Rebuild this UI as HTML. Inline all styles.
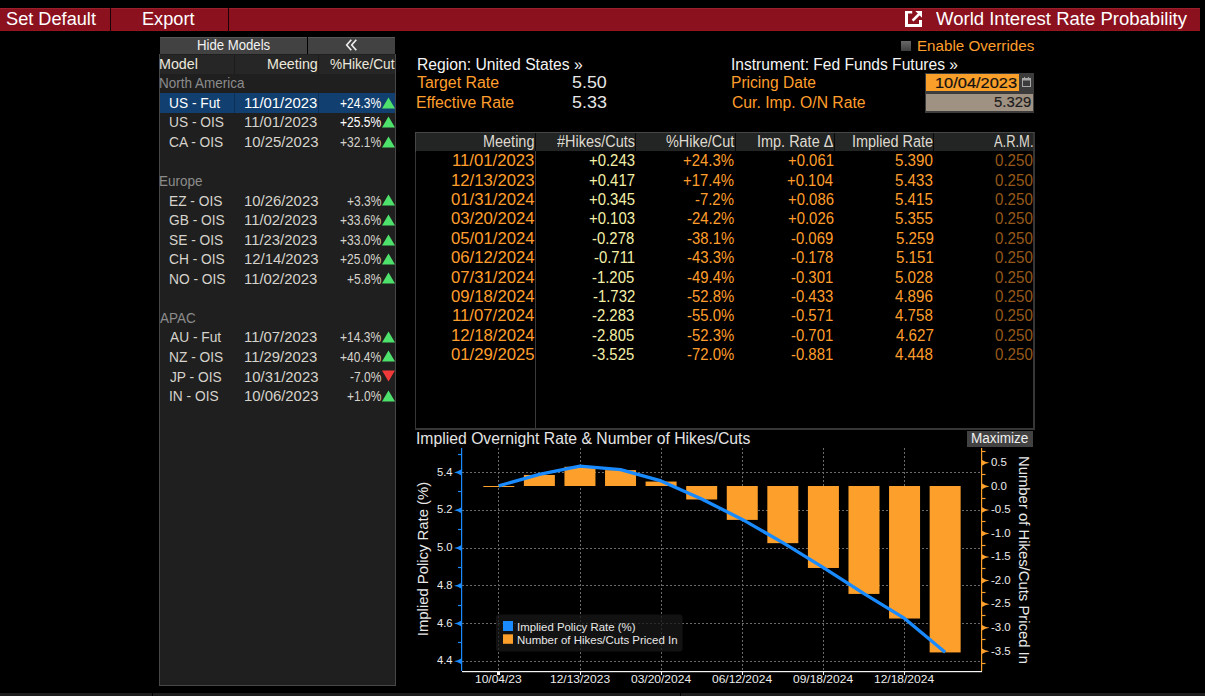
<!DOCTYPE html>
<html><head><meta charset="utf-8"><style>
html,body{margin:0;padding:0;background:#000;width:1205px;height:696px;overflow:hidden}
body{position:relative;font-family:"Liberation Sans",sans-serif}
.t{position:absolute;white-space:nowrap;line-height:1;transform-origin:0 50%}
.r{position:absolute}
</style></head><body>
<div class="r" style="left:0px;top:8px;width:1200px;height:23px;background:#8b111f;"></div>
<div class="r" style="left:0px;top:8px;width:1200px;height:1px;background:#9c1f2c;"></div>
<div class="r" style="left:0px;top:30px;width:1200px;height:1px;background:#94141f;"></div>
<div class="r" style="left:110px;top:8px;width:1px;height:23px;background:#1a0306;"></div>
<div class="r" style="left:228px;top:8px;width:1px;height:23px;background:#1a0306;"></div>
<span class="t" style="left:6.48px;top:9.68px;font-size:18.5px;color:#fff;transform:scaleX(0.9828);">Set Default</span>
<span class="t" style="left:142.05px;top:9.68px;font-size:18.5px;color:#fff;transform:scaleX(0.9826);">Export</span>
<span class="t" style="left:935.91px;top:9.64px;font-size:18.9px;color:#fff;transform:scaleX(0.9808);">World Interest Rate Probability</span>
<svg class="r" style="left:905px;top:11px" width="17" height="16" viewBox="0 0 17 16">
<path d="M0 0H7.2V2.6H3V13H14V9H17V16H0Z" fill="#fff"/>
<path d="M10.3 0H17V6.7Z" fill="#fff"/>
<path d="M7.6 9.6L14.2 3" stroke="#fff" stroke-width="2.6"/>
</svg>
<div class="r" style="left:901px;top:40.5px;width:10px;height:10px;background:linear-gradient(#686868,#3e3e3e);"></div>
<span class="t" style="left:916.59px;top:38.23px;font-size:15.5px;color:#ff9e2c;transform:scaleX(0.9792);">Enable Overrides</span>
<div class="r" style="left:159px;top:54px;width:237px;height:632px;background:#1f1f1f;box-sizing:border-box;border:1px solid #474747;border-top:none"></div>
<div class="r" style="left:160px;top:37px;width:147px;height:17px;background:#424242;"></div>
<div class="r" style="left:308px;top:37px;width:87px;height:17px;background:#424242;"></div>
<span class="t" style="left:196.55px;top:38.07px;font-size:14.5px;color:#f2f2f2;transform:scaleX(0.9081);">Hide Models</span>
<svg class="r" style="left:340px;top:34px" width="24" height="20"><path d="M11.3 5.7L6.7 11L11.3 16.3M16.3 5.7L11.7 11L16.3 16.3" fill="none" stroke="#ececec" stroke-width="1.7"/></svg>
<div class="r" style="left:160px;top:37px;width:147px;height:1px;background:#575757;"></div>
<div class="r" style="left:308px;top:37px;width:87px;height:1px;background:#575757;"></div>
<div class="r" style="left:160px;top:55px;width:235px;height:19px;background:#262626;"></div>
<div class="r" style="left:234px;top:55px;width:1px;height:19px;background:#1c1c1c;"></div>
<div class="r" style="left:318px;top:55px;width:1px;height:19px;background:#1c1c1c;"></div>
<span class="t" style="left:159.36px;top:57.07px;font-size:14.5px;color:#ece8dc;transform:scaleX(0.9856);">Model</span>
<span class="t" style="left:267.16px;top:57.07px;font-size:14.5px;color:#ece8dc;transform:scaleX(0.9849);">Meeting</span>
<span class="t" style="left:330.02px;top:57.07px;font-size:14.5px;color:#ece8dc;transform:scaleX(0.9416);">%Hike/Cut</span>
<span class="t" style="left:159.12px;top:76.28px;font-size:14.5px;color:#8c8c8c;transform:scaleX(0.9300);">North America</span>
<div class="r" style="left:160px;top:93px;width:235px;height:20px;background:#113f70;"></div>
<div class="r" style="left:234px;top:93px;width:1px;height:20px;background:#0b3159;"></div>
<div class="r" style="left:318px;top:93px;width:1px;height:20px;background:#0b3159;"></div>
<span class="t" style="left:168.97px;top:95.83px;font-size:14.5px;color:#ffffff;transform:scaleX(0.9473);">US - Fut</span>
<span class="t" style="left:244.28px;top:95.83px;font-size:14.5px;color:#ffffff;transform:scaleX(1.0255);">11/01/2023</span>
<span class="t" style="left:340.00px;top:95.83px;font-size:14.5px;color:#ffffff;transform:scaleX(0.8313);">+24.3%</span>
<svg class="r" style="left:382px;top:97px" width="13" height="12"><path d="M6.5 0.5L13 11.5H0Z" fill="#4ee26c"/></svg>
<span class="t" style="left:168.97px;top:115.38px;font-size:14.5px;color:#d6d3cc;transform:scaleX(0.9473);">US - OIS</span>
<span class="t" style="left:244.28px;top:115.38px;font-size:14.5px;color:#d6d3cc;transform:scaleX(1.0255);">11/01/2023</span>
<span class="t" style="left:340.00px;top:115.38px;font-size:14.5px;color:#ffffff;transform:scaleX(0.8313);">+25.5%</span>
<svg class="r" style="left:382px;top:116px" width="13" height="12"><path d="M6.5 0.5L13 11.5H0Z" fill="#4ee26c"/></svg>
<span class="t" style="left:169.31px;top:134.93px;font-size:14.5px;color:#d6d3cc;transform:scaleX(0.9473);">CA - OIS</span>
<span class="t" style="left:244.28px;top:134.93px;font-size:14.5px;color:#d6d3cc;transform:scaleX(1.0255);">10/25/2023</span>
<span class="t" style="left:340.00px;top:134.93px;font-size:14.5px;color:#d6d3cc;transform:scaleX(0.8313);">+32.1%</span>
<svg class="r" style="left:382px;top:136px" width="13" height="12"><path d="M6.5 0.5L13 11.5H0Z" fill="#4ee26c"/></svg>
<span class="t" style="left:159.12px;top:174.03px;font-size:14.5px;color:#8c8c8c;transform:scaleX(0.9300);">Europe</span>
<span class="t" style="left:168.90px;top:193.58px;font-size:14.5px;color:#d6d3cc;transform:scaleX(0.9473);">EZ - OIS</span>
<span class="t" style="left:244.28px;top:193.58px;font-size:14.5px;color:#d6d3cc;transform:scaleX(1.0255);">10/26/2023</span>
<span class="t" style="left:346.69px;top:193.58px;font-size:14.5px;color:#d6d3cc;transform:scaleX(0.8313);">+3.3%</span>
<svg class="r" style="left:382px;top:194px" width="13" height="12"><path d="M6.5 0.5L13 11.5H0Z" fill="#4ee26c"/></svg>
<span class="t" style="left:169.31px;top:213.13px;font-size:14.5px;color:#d6d3cc;transform:scaleX(0.9473);">GB - OIS</span>
<span class="t" style="left:244.28px;top:213.13px;font-size:14.5px;color:#d6d3cc;transform:scaleX(1.0255);">11/02/2023</span>
<span class="t" style="left:340.00px;top:213.13px;font-size:14.5px;color:#d6d3cc;transform:scaleX(0.8313);">+33.6%</span>
<svg class="r" style="left:382px;top:214px" width="13" height="12"><path d="M6.5 0.5L13 11.5H0Z" fill="#4ee26c"/></svg>
<span class="t" style="left:169.38px;top:232.68px;font-size:14.5px;color:#d6d3cc;transform:scaleX(0.9473);">SE - OIS</span>
<span class="t" style="left:244.28px;top:232.68px;font-size:14.5px;color:#d6d3cc;transform:scaleX(1.0255);">11/23/2023</span>
<span class="t" style="left:340.00px;top:232.68px;font-size:14.5px;color:#d6d3cc;transform:scaleX(0.8313);">+33.0%</span>
<svg class="r" style="left:382px;top:234px" width="13" height="12"><path d="M6.5 0.5L13 11.5H0Z" fill="#4ee26c"/></svg>
<span class="t" style="left:169.31px;top:252.23px;font-size:14.5px;color:#d6d3cc;transform:scaleX(0.9473);">CH - OIS</span>
<span class="t" style="left:244.28px;top:252.23px;font-size:14.5px;color:#d6d3cc;transform:scaleX(1.0255);">12/14/2023</span>
<span class="t" style="left:340.00px;top:252.23px;font-size:14.5px;color:#d6d3cc;transform:scaleX(0.8313);">+25.0%</span>
<svg class="r" style="left:382px;top:253px" width="13" height="12"><path d="M6.5 0.5L13 11.5H0Z" fill="#4ee26c"/></svg>
<span class="t" style="left:168.90px;top:271.77px;font-size:14.5px;color:#d6d3cc;transform:scaleX(0.9473);">NO - OIS</span>
<span class="t" style="left:244.28px;top:271.77px;font-size:14.5px;color:#d6d3cc;transform:scaleX(1.0255);">11/02/2023</span>
<span class="t" style="left:346.69px;top:271.77px;font-size:14.5px;color:#d6d3cc;transform:scaleX(0.8313);">+5.8%</span>
<svg class="r" style="left:382px;top:272px" width="13" height="12"><path d="M6.5 0.5L13 11.5H0Z" fill="#4ee26c"/></svg>
<span class="t" style="left:160.20px;top:310.88px;font-size:14.5px;color:#8c8c8c;transform:scaleX(0.9300);">APAC</span>
<span class="t" style="left:170.00px;top:330.43px;font-size:14.5px;color:#d6d3cc;transform:scaleX(0.9473);">AU - Fut</span>
<span class="t" style="left:244.28px;top:330.43px;font-size:14.5px;color:#d6d3cc;transform:scaleX(1.0255);">11/07/2023</span>
<span class="t" style="left:340.00px;top:330.43px;font-size:14.5px;color:#d6d3cc;transform:scaleX(0.8313);">+14.3%</span>
<svg class="r" style="left:382px;top:331px" width="13" height="12"><path d="M6.5 0.5L13 11.5H0Z" fill="#4ee26c"/></svg>
<span class="t" style="left:168.90px;top:349.97px;font-size:14.5px;color:#d6d3cc;transform:scaleX(0.9473);">NZ - OIS</span>
<span class="t" style="left:244.28px;top:349.97px;font-size:14.5px;color:#d6d3cc;transform:scaleX(1.0255);">11/29/2023</span>
<span class="t" style="left:340.00px;top:349.97px;font-size:14.5px;color:#d6d3cc;transform:scaleX(0.8313);">+40.4%</span>
<svg class="r" style="left:382px;top:350px" width="13" height="12"><path d="M6.5 0.5L13 11.5H0Z" fill="#4ee26c"/></svg>
<span class="t" style="left:169.79px;top:369.52px;font-size:14.5px;color:#d6d3cc;transform:scaleX(0.9473);">JP - OIS</span>
<span class="t" style="left:244.28px;top:369.52px;font-size:14.5px;color:#d6d3cc;transform:scaleX(1.0255);">10/31/2023</span>
<span class="t" style="left:349.70px;top:369.52px;font-size:14.5px;color:#d6d3cc;transform:scaleX(0.8313);">-7.0%</span>
<svg class="r" style="left:382px;top:370px" width="13" height="12"><path d="M0 0.5H13L6.5 11.5Z" fill="#f03a3a"/></svg>
<span class="t" style="left:168.76px;top:389.07px;font-size:14.5px;color:#d6d3cc;transform:scaleX(0.9473);">IN - OIS</span>
<span class="t" style="left:244.28px;top:389.07px;font-size:14.5px;color:#d6d3cc;transform:scaleX(1.0255);">10/06/2023</span>
<span class="t" style="left:346.69px;top:389.07px;font-size:14.5px;color:#d6d3cc;transform:scaleX(0.8313);">+1.0%</span>
<svg class="r" style="left:382px;top:390px" width="13" height="12"><path d="M6.5 0.5L13 11.5H0Z" fill="#4ee26c"/></svg>
<span class="t" style="left:416.94px;top:56.60px;font-size:16px;color:#f4f4f4;transform:scaleX(0.9806);">Region: United States »</span>
<span class="t" style="left:416.78px;top:74.60px;font-size:16px;color:#ff9e2c;transform:scaleX(0.9917);">Target Rate</span>
<span class="t" style="left:415.84px;top:94.80px;font-size:16px;color:#ff9e2c;transform:scaleX(0.9879);">Effective Rate</span>
<span class="t" style="left:571.89px;top:74.60px;font-size:16px;color:#e8e8e8;transform:scaleX(1.1163);">5.50</span>
<span class="t" style="left:571.88px;top:94.80px;font-size:16px;color:#e8e8e8;transform:scaleX(1.1193);">5.33</span>
<span class="t" style="left:731.30px;top:56.60px;font-size:16px;color:#f4f4f4;transform:scaleX(0.9741);">Instrument: Fed Funds Futures »</span>
<span class="t" style="left:731.45px;top:74.60px;font-size:16px;color:#ff9e2c;transform:scaleX(0.9739);">Pricing Date</span>
<span class="t" style="left:731.91px;top:94.80px;font-size:16px;color:#ff9e2c;transform:scaleX(0.9816);">Cur. Imp. O/N Rate</span>
<div class="r" style="left:925px;top:73px;width:109px;height:40px;background:#3c3c3c;"></div>
<div class="r" style="left:926px;top:74px;width:93px;height:17px;background:#fa9f2a;"></div>
<div class="r" style="left:926px;top:94px;width:107px;height:17px;background:#a09282;"></div>
<svg class="r" style="left:1021px;top:76px" width="11" height="12" viewBox="0 0 11 12">
<rect x="1.5" y="2.5" width="8" height="8" fill="none" stroke="#a8a8a8" stroke-width="1"/>
<rect x="1.5" y="2.5" width="8" height="2" fill="#a8a8a8"/>
<rect x="3" y="1" width="1" height="2" fill="#a8a8a8"/><rect x="7" y="1" width="1" height="2" fill="#a8a8a8"/>
</svg>
<span class="t" style="left:935.17px;top:75.28px;font-size:15.2px;color:#111;transform:scaleX(1.0790);-webkit-text-stroke:0.2px #111">10/04/2023</span>
<span class="t" style="left:994.11px;top:94.18px;font-size:15.2px;color:#1c1c1c;transform:scaleX(0.9780);-webkit-text-stroke:0.2px #1c1c1c">5.329</span>
<div class="r" style="left:415px;top:132px;width:620px;height:298px;background:#000;box-sizing:border-box;border:1px solid #363636;border-right-width:2px;border-bottom-width:2px"></div>
<div class="r" style="left:415px;top:132px;width:619px;height:1px;background:#474747;"></div>
<div class="r" style="left:415px;top:132px;width:1px;height:20px;background:#474747;"></div>
<div class="r" style="left:416px;top:133px;width:617px;height:18px;background:#232424;"></div>
<div class="r" style="left:535px;top:133px;width:1px;height:18px;background:#0a0a0a;"></div>
<div class="r" style="left:635px;top:133px;width:1px;height:18px;background:#0a0a0a;"></div>
<div class="r" style="left:735px;top:133px;width:1px;height:18px;background:#0a0a0a;"></div>
<div class="r" style="left:834px;top:133px;width:1px;height:18px;background:#0a0a0a;"></div>
<div class="r" style="left:933px;top:133px;width:1px;height:18px;background:#0a0a0a;"></div>
<div class="r" style="left:535px;top:151px;width:1px;height:277px;background:#3a3a3a;"></div>
<span class="t" style="left:483.34px;top:133.80px;font-size:16px;color:#dedad0;transform:scaleX(0.9036);">Meeting</span>
<span class="t" style="left:556.58px;top:133.80px;font-size:16px;color:#dedad0;transform:scaleX(0.9036);">#Hikes/Cuts</span>
<span class="t" style="left:665.53px;top:133.80px;font-size:16px;color:#dedad0;transform:scaleX(0.9036);">%Hike/Cut</span>
<span class="t" style="left:756.93px;top:133.80px;font-size:16px;color:#dedad0;transform:scaleX(0.9036);">Imp. Rate Δ</span>
<span class="t" style="left:852.17px;top:133.80px;font-size:16px;color:#dedad0;transform:scaleX(0.9036);">Implied Rate</span>
<span class="t" style="left:994.20px;top:133.80px;font-size:16px;color:#dedad0;transform:scaleX(0.8073);">A.R.M.</span>
<span class="t" style="left:452.05px;top:153.19px;font-size:15.9px;color:#ff9e2c;transform:scaleX(1.0515);">11/01/2023</span>
<span class="t" style="left:588.66px;top:153.19px;font-size:15.9px;color:#f4f0a8;transform:scaleX(0.9366);">+0.243</span>
<span class="t" style="left:683.29px;top:153.19px;font-size:15.9px;color:#ff9e2c;transform:scaleX(0.9366);">+24.3%</span>
<span class="t" style="left:787.63px;top:153.19px;font-size:15.9px;color:#ff9e2c;transform:scaleX(0.9366);">+0.061</span>
<span class="t" style="left:895.39px;top:153.19px;font-size:15.9px;color:#ff9e2c;transform:scaleX(0.9518);">5.390</span>
<span class="t" style="left:995.19px;top:153.19px;font-size:15.9px;color:#97591a;transform:scaleX(0.9518);">0.250</span>
<span class="t" style="left:450.79px;top:172.59px;font-size:15.9px;color:#ff9e2c;transform:scaleX(1.0515);">12/13/2023</span>
<span class="t" style="left:588.80px;top:172.59px;font-size:15.9px;color:#f4f0a8;transform:scaleX(0.9366);">+0.417</span>
<span class="t" style="left:683.29px;top:172.59px;font-size:15.9px;color:#ff9e2c;transform:scaleX(0.9366);">+17.4%</span>
<span class="t" style="left:787.41px;top:172.59px;font-size:15.9px;color:#ff9e2c;transform:scaleX(0.9366);">+0.104</span>
<span class="t" style="left:895.47px;top:172.59px;font-size:15.9px;color:#ff9e2c;transform:scaleX(0.9518);">5.433</span>
<span class="t" style="left:995.19px;top:172.59px;font-size:15.9px;color:#97591a;transform:scaleX(0.9518);">0.250</span>
<span class="t" style="left:450.63px;top:191.99px;font-size:15.9px;color:#ff9e2c;transform:scaleX(1.0515);">01/31/2024</span>
<span class="t" style="left:588.66px;top:191.99px;font-size:15.9px;color:#f4f0a8;transform:scaleX(0.9366);">+0.345</span>
<span class="t" style="left:695.28px;top:191.99px;font-size:15.9px;color:#ff9e2c;transform:scaleX(0.9366);">-7.2%</span>
<span class="t" style="left:787.56px;top:191.99px;font-size:15.9px;color:#ff9e2c;transform:scaleX(0.9366);">+0.086</span>
<span class="t" style="left:895.47px;top:191.99px;font-size:15.9px;color:#ff9e2c;transform:scaleX(0.9518);">5.415</span>
<span class="t" style="left:995.19px;top:191.99px;font-size:15.9px;color:#97591a;transform:scaleX(0.9518);">0.250</span>
<span class="t" style="left:450.63px;top:211.39px;font-size:15.9px;color:#ff9e2c;transform:scaleX(1.0515);">03/20/2024</span>
<span class="t" style="left:588.66px;top:211.39px;font-size:15.9px;color:#f4f0a8;transform:scaleX(0.9366);">+0.103</span>
<span class="t" style="left:687.02px;top:211.39px;font-size:15.9px;color:#ff9e2c;transform:scaleX(0.9366);">-24.2%</span>
<span class="t" style="left:787.56px;top:211.39px;font-size:15.9px;color:#ff9e2c;transform:scaleX(0.9366);">+0.026</span>
<span class="t" style="left:895.47px;top:211.39px;font-size:15.9px;color:#ff9e2c;transform:scaleX(0.9518);">5.355</span>
<span class="t" style="left:995.19px;top:211.39px;font-size:15.9px;color:#97591a;transform:scaleX(0.9518);">0.250</span>
<span class="t" style="left:450.63px;top:230.78px;font-size:15.9px;color:#ff9e2c;transform:scaleX(1.0515);">05/01/2024</span>
<span class="t" style="left:592.38px;top:230.78px;font-size:15.9px;color:#f4f0a8;transform:scaleX(0.9366);">-0.278</span>
<span class="t" style="left:687.02px;top:230.78px;font-size:15.9px;color:#ff9e2c;transform:scaleX(0.9366);">-38.1%</span>
<span class="t" style="left:791.35px;top:230.78px;font-size:15.9px;color:#ff9e2c;transform:scaleX(0.9366);">-0.069</span>
<span class="t" style="left:895.55px;top:230.78px;font-size:15.9px;color:#ff9e2c;transform:scaleX(0.9518);">5.259</span>
<span class="t" style="left:995.19px;top:230.78px;font-size:15.9px;color:#97591a;transform:scaleX(0.9518);">0.250</span>
<span class="t" style="left:450.63px;top:250.19px;font-size:15.9px;color:#ff9e2c;transform:scaleX(1.0515);">06/12/2024</span>
<span class="t" style="left:593.57px;top:250.19px;font-size:15.9px;color:#f4f0a8;transform:scaleX(0.9366);">-0.711</span>
<span class="t" style="left:687.02px;top:250.19px;font-size:15.9px;color:#ff9e2c;transform:scaleX(0.9366);">-43.3%</span>
<span class="t" style="left:791.28px;top:250.19px;font-size:15.9px;color:#ff9e2c;transform:scaleX(0.9366);">-0.178</span>
<span class="t" style="left:895.55px;top:250.19px;font-size:15.9px;color:#ff9e2c;transform:scaleX(0.9518);">5.151</span>
<span class="t" style="left:995.19px;top:250.19px;font-size:15.9px;color:#97591a;transform:scaleX(0.9518);">0.250</span>
<span class="t" style="left:450.63px;top:269.58px;font-size:15.9px;color:#ff9e2c;transform:scaleX(1.0515);">07/31/2024</span>
<span class="t" style="left:592.38px;top:269.58px;font-size:15.9px;color:#f4f0a8;transform:scaleX(0.9366);">-1.205</span>
<span class="t" style="left:687.02px;top:269.58px;font-size:15.9px;color:#ff9e2c;transform:scaleX(0.9366);">-49.4%</span>
<span class="t" style="left:791.35px;top:269.58px;font-size:15.9px;color:#ff9e2c;transform:scaleX(0.9366);">-0.301</span>
<span class="t" style="left:895.47px;top:269.58px;font-size:15.9px;color:#ff9e2c;transform:scaleX(0.9518);">5.028</span>
<span class="t" style="left:995.19px;top:269.58px;font-size:15.9px;color:#97591a;transform:scaleX(0.9518);">0.250</span>
<span class="t" style="left:450.63px;top:288.99px;font-size:15.9px;color:#ff9e2c;transform:scaleX(1.0515);">09/18/2024</span>
<span class="t" style="left:592.53px;top:288.99px;font-size:15.9px;color:#f4f0a8;transform:scaleX(0.9366);">-1.732</span>
<span class="t" style="left:687.02px;top:288.99px;font-size:15.9px;color:#ff9e2c;transform:scaleX(0.9366);">-52.8%</span>
<span class="t" style="left:791.28px;top:288.99px;font-size:15.9px;color:#ff9e2c;transform:scaleX(0.9366);">-0.433</span>
<span class="t" style="left:895.47px;top:288.99px;font-size:15.9px;color:#ff9e2c;transform:scaleX(0.9518);">4.896</span>
<span class="t" style="left:995.19px;top:288.99px;font-size:15.9px;color:#97591a;transform:scaleX(0.9518);">0.250</span>
<span class="t" style="left:451.88px;top:308.38px;font-size:15.9px;color:#ff9e2c;transform:scaleX(1.0515);">11/07/2024</span>
<span class="t" style="left:592.38px;top:308.38px;font-size:15.9px;color:#f4f0a8;transform:scaleX(0.9366);">-2.283</span>
<span class="t" style="left:687.02px;top:308.38px;font-size:15.9px;color:#ff9e2c;transform:scaleX(0.9366);">-55.0%</span>
<span class="t" style="left:791.35px;top:308.38px;font-size:15.9px;color:#ff9e2c;transform:scaleX(0.9366);">-0.571</span>
<span class="t" style="left:895.47px;top:308.38px;font-size:15.9px;color:#ff9e2c;transform:scaleX(0.9518);">4.758</span>
<span class="t" style="left:995.19px;top:308.38px;font-size:15.9px;color:#97591a;transform:scaleX(0.9518);">0.250</span>
<span class="t" style="left:450.63px;top:327.78px;font-size:15.9px;color:#ff9e2c;transform:scaleX(1.0515);">12/18/2024</span>
<span class="t" style="left:592.38px;top:327.78px;font-size:15.9px;color:#f4f0a8;transform:scaleX(0.9366);">-2.805</span>
<span class="t" style="left:687.02px;top:327.78px;font-size:15.9px;color:#ff9e2c;transform:scaleX(0.9366);">-52.3%</span>
<span class="t" style="left:791.35px;top:327.78px;font-size:15.9px;color:#ff9e2c;transform:scaleX(0.9366);">-0.701</span>
<span class="t" style="left:895.62px;top:327.78px;font-size:15.9px;color:#ff9e2c;transform:scaleX(0.9518);">4.627</span>
<span class="t" style="left:995.19px;top:327.78px;font-size:15.9px;color:#97591a;transform:scaleX(0.9518);">0.250</span>
<span class="t" style="left:450.79px;top:347.19px;font-size:15.9px;color:#ff9e2c;transform:scaleX(1.0515);">01/29/2025</span>
<span class="t" style="left:592.38px;top:347.19px;font-size:15.9px;color:#f4f0a8;transform:scaleX(0.9366);">-3.525</span>
<span class="t" style="left:687.02px;top:347.19px;font-size:15.9px;color:#ff9e2c;transform:scaleX(0.9366);">-72.0%</span>
<span class="t" style="left:791.35px;top:347.19px;font-size:15.9px;color:#ff9e2c;transform:scaleX(0.9366);">-0.881</span>
<span class="t" style="left:895.47px;top:347.19px;font-size:15.9px;color:#ff9e2c;transform:scaleX(0.9518);">4.448</span>
<span class="t" style="left:995.19px;top:347.19px;font-size:15.9px;color:#97591a;transform:scaleX(0.9518);">0.250</span>
<span class="t" style="left:416.48px;top:430.38px;font-size:16.5px;color:#e4e4e4;transform:scaleX(0.9542);">Implied Overnight Rate &amp; Number of Hikes/Cuts</span>
<div class="r" style="left:967px;top:431px;width:66px;height:16px;background:#424242;"></div>
<span class="t" style="left:971.11px;top:430.90px;font-size:14px;color:#f0f0f0;transform:scaleX(0.9698);">Maximize</span>
<svg class="r" style="left:0;top:0" width="1205" height="696">
<line x1="462" y1="472.5" x2="981" y2="472.5" stroke="#6a6a6a" stroke-width="1" stroke-dasharray="2,2"/>
<line x1="462" y1="510.5" x2="981" y2="510.5" stroke="#6a6a6a" stroke-width="1" stroke-dasharray="2,2"/>
<line x1="462" y1="548.5" x2="981" y2="548.5" stroke="#6a6a6a" stroke-width="1" stroke-dasharray="2,2"/>
<line x1="462" y1="585.5" x2="981" y2="585.5" stroke="#6a6a6a" stroke-width="1" stroke-dasharray="2,2"/>
<line x1="462" y1="623.5" x2="981" y2="623.5" stroke="#6a6a6a" stroke-width="1" stroke-dasharray="2,2"/>
<line x1="462" y1="661.5" x2="981" y2="661.5" stroke="#6a6a6a" stroke-width="1" stroke-dasharray="2,2"/>
<line x1="498.5" y1="448" x2="498.5" y2="671" stroke="#6a6a6a" stroke-width="1" stroke-dasharray="2,2"/>
<line x1="580.5" y1="448" x2="580.5" y2="671" stroke="#6a6a6a" stroke-width="1" stroke-dasharray="2,2"/>
<line x1="661.5" y1="448" x2="661.5" y2="671" stroke="#6a6a6a" stroke-width="1" stroke-dasharray="2,2"/>
<line x1="742.5" y1="448" x2="742.5" y2="671" stroke="#6a6a6a" stroke-width="1" stroke-dasharray="2,2"/>
<line x1="823.5" y1="448" x2="823.5" y2="671" stroke="#6a6a6a" stroke-width="1" stroke-dasharray="2,2"/>
<line x1="904.5" y1="448" x2="904.5" y2="671" stroke="#6a6a6a" stroke-width="1" stroke-dasharray="2,2"/>
<rect x="483.30" y="486" width="31" height="1" fill="#fd9f2b"/>
<rect x="523.88" y="474.95" width="31" height="11.05" fill="#fd9f2b"/>
<rect x="564.45" y="466.76" width="31" height="19.24" fill="#fd9f2b"/>
<rect x="605.03" y="470.15" width="31" height="15.85" fill="#fd9f2b"/>
<rect x="645.60" y="481.55" width="31" height="4.45" fill="#fd9f2b"/>
<rect x="686.18" y="486.00" width="31" height="13.49" fill="#fd9f2b"/>
<rect x="726.76" y="486.00" width="31" height="33.89" fill="#fd9f2b"/>
<rect x="767.33" y="486.00" width="31" height="57.16" fill="#fd9f2b"/>
<rect x="807.91" y="486.00" width="31" height="81.98" fill="#fd9f2b"/>
<rect x="848.48" y="486.00" width="31" height="107.93" fill="#fd9f2b"/>
<rect x="889.06" y="486.00" width="31" height="132.52" fill="#fd9f2b"/>
<rect x="929.64" y="486.00" width="31" height="166.43" fill="#fd9f2b"/>
<polyline points="498.80,485.81 539.38,474.29 579.95,466.17 620.53,469.57 661.10,480.90 701.68,499.03 742.26,519.44 782.83,542.67 823.41,567.61 863.98,593.67 904.56,618.42 945.14,652.23" fill="none" stroke="#1a8bff" stroke-width="3.3" stroke-linejoin="round"/>
<rect x="461" y="448" width="1.2" height="223" fill="#1a8bff"/>
<path d="M454 472.40Q458 471.60 461 469.60V475.20Q458 473.20 454 472.40Z" fill="#1a8bff"/>
<path d="M454 510.18Q458 509.38 461 507.38V512.98Q458 510.98 454 510.18Z" fill="#1a8bff"/>
<path d="M454 547.96Q458 547.16 461 545.16V550.76Q458 548.76 454 547.96Z" fill="#1a8bff"/>
<path d="M454 585.74Q458 584.94 461 582.94V588.54Q458 586.54 454 585.74Z" fill="#1a8bff"/>
<path d="M454 623.52Q458 622.72 461 620.72V626.32Q458 624.32 454 623.52Z" fill="#1a8bff"/>
<path d="M454 661.30Q458 660.50 461 658.50V664.10Q458 662.10 454 661.30Z" fill="#1a8bff"/>
<line x1="458" y1="454.5" x2="461" y2="454.5" stroke="#1a8bff" stroke-width="1.2"/>
<line x1="458" y1="491.5" x2="461" y2="491.5" stroke="#1a8bff" stroke-width="1.2"/>
<line x1="458" y1="529.5" x2="461" y2="529.5" stroke="#1a8bff" stroke-width="1.2"/>
<line x1="458" y1="567.5" x2="461" y2="567.5" stroke="#1a8bff" stroke-width="1.2"/>
<line x1="458" y1="605.5" x2="461" y2="605.5" stroke="#1a8bff" stroke-width="1.2"/>
<line x1="458" y1="642.5" x2="461" y2="642.5" stroke="#1a8bff" stroke-width="1.2"/>
<rect x="981" y="448" width="1.2" height="223" fill="#fd9f2b"/>
<path d="M989.5 462.85Q985 462.05 982 460.05V465.65Q985 463.65 989.5 462.85Z" fill="#fd9f2b"/>
<path d="M989.5 486.40Q985 485.60 982 483.60V489.20Q985 487.20 989.5 486.40Z" fill="#fd9f2b"/>
<path d="M989.5 509.95Q985 509.15 982 507.15V512.75Q985 510.75 989.5 509.95Z" fill="#fd9f2b"/>
<path d="M989.5 533.50Q985 532.70 982 530.70V536.30Q985 534.30 989.5 533.50Z" fill="#fd9f2b"/>
<path d="M989.5 557.05Q985 556.25 982 554.25V559.85Q985 557.85 989.5 557.05Z" fill="#fd9f2b"/>
<path d="M989.5 580.60Q985 579.80 982 577.80V583.40Q985 581.40 989.5 580.60Z" fill="#fd9f2b"/>
<path d="M989.5 604.15Q985 603.35 982 601.35V606.95Q985 604.95 989.5 604.15Z" fill="#fd9f2b"/>
<path d="M989.5 627.70Q985 626.90 982 624.90V630.50Q985 628.50 989.5 627.70Z" fill="#fd9f2b"/>
<path d="M989.5 651.25Q985 650.45 982 648.45V654.05Q985 652.05 989.5 651.25Z" fill="#fd9f2b"/>
<line x1="982" y1="451.5" x2="985.5" y2="451.5" stroke="#fd9f2b" stroke-width="1.2"/>
<line x1="982" y1="474.5" x2="985.5" y2="474.5" stroke="#fd9f2b" stroke-width="1.2"/>
<line x1="982" y1="498.5" x2="985.5" y2="498.5" stroke="#fd9f2b" stroke-width="1.2"/>
<line x1="982" y1="521.5" x2="985.5" y2="521.5" stroke="#fd9f2b" stroke-width="1.2"/>
<line x1="982" y1="545.5" x2="985.5" y2="545.5" stroke="#fd9f2b" stroke-width="1.2"/>
<line x1="982" y1="568.5" x2="985.5" y2="568.5" stroke="#fd9f2b" stroke-width="1.2"/>
<line x1="982" y1="592.5" x2="985.5" y2="592.5" stroke="#fd9f2b" stroke-width="1.2"/>
<line x1="982" y1="615.5" x2="985.5" y2="615.5" stroke="#fd9f2b" stroke-width="1.2"/>
<line x1="982" y1="639.5" x2="985.5" y2="639.5" stroke="#fd9f2b" stroke-width="1.2"/>
<line x1="982" y1="663.5" x2="985.5" y2="663.5" stroke="#fd9f2b" stroke-width="1.2"/>
<rect x="462" y="671" width="520" height="1.2" fill="#f4f4f4"/>
<rect x="497" y="671" width="3" height="4" fill="#f4f4f4"/>
<rect x="580" y="671" width="1" height="4" fill="#f4f4f4"/>
<rect x="661" y="671" width="1" height="4" fill="#f4f4f4"/>
<rect x="742" y="671" width="1" height="4" fill="#f4f4f4"/>
<rect x="823" y="671" width="1" height="4" fill="#f4f4f4"/>
<rect x="904" y="671" width="1" height="4" fill="#f4f4f4"/>
<rect x="496" y="614.5" width="186.5" height="37" rx="3" fill="#181818" fill-opacity="0.75"/>
<rect x="503" y="621" width="10" height="10" fill="#1a8bff"/>
<rect x="503" y="634.3" width="10" height="9.5" fill="#fd9f2b"/>
</svg>
<span class="t" style="left:436.55px;top:466.57px;font-size:11.8px;color:#ececec;transform:scaleX(0.9502);">5.4</span>
<span class="t" style="left:436.78px;top:504.35px;font-size:11.8px;color:#ececec;transform:scaleX(0.9502);">5.2</span>
<span class="t" style="left:436.61px;top:542.13px;font-size:11.8px;color:#ececec;transform:scaleX(0.9502);">5.0</span>
<span class="t" style="left:436.66px;top:579.91px;font-size:11.8px;color:#ececec;transform:scaleX(0.9502);">4.8</span>
<span class="t" style="left:436.66px;top:617.69px;font-size:11.8px;color:#ececec;transform:scaleX(0.9502);">4.6</span>
<span class="t" style="left:436.55px;top:655.47px;font-size:11.8px;color:#ececec;transform:scaleX(0.9502);">4.4</span>
<span class="t" style="left:990.54px;top:457.12px;font-size:11.8px;color:#ececec;transform:scaleX(0.9704);">0.5</span>
<span class="t" style="left:990.54px;top:480.67px;font-size:11.8px;color:#ececec;transform:scaleX(0.9704);">0.0</span>
<span class="t" style="left:991.38px;top:504.22px;font-size:11.8px;color:#ececec;transform:scaleX(0.9704);">-0.5</span>
<span class="t" style="left:991.38px;top:527.77px;font-size:11.8px;color:#ececec;transform:scaleX(0.9704);">-1.0</span>
<span class="t" style="left:991.38px;top:551.32px;font-size:11.8px;color:#ececec;transform:scaleX(0.9704);">-1.5</span>
<span class="t" style="left:991.38px;top:574.87px;font-size:11.8px;color:#ececec;transform:scaleX(0.9704);">-2.0</span>
<span class="t" style="left:991.38px;top:598.42px;font-size:11.8px;color:#ececec;transform:scaleX(0.9704);">-2.5</span>
<span class="t" style="left:991.38px;top:621.97px;font-size:11.8px;color:#ececec;transform:scaleX(0.9704);">-3.0</span>
<span class="t" style="left:991.38px;top:645.52px;font-size:11.8px;color:#ececec;transform:scaleX(0.9704);">-3.5</span>
<span class="t" style="left:474.94px;top:673.62px;font-size:11.5px;color:#ececec;transform:scaleX(1.0438);">10/04/23</span>
<span class="t" style="left:550.25px;top:673.62px;font-size:11.5px;color:#ececec;transform:scaleX(1.0438);">12/13/2023</span>
<span class="t" style="left:631.40px;top:673.62px;font-size:11.5px;color:#ececec;transform:scaleX(1.0438);">03/20/2024</span>
<span class="t" style="left:712.40px;top:673.62px;font-size:11.5px;color:#ececec;transform:scaleX(1.0438);">06/12/2024</span>
<span class="t" style="left:793.40px;top:673.62px;font-size:11.5px;color:#ececec;transform:scaleX(1.0438);">09/18/2024</span>
<span class="t" style="left:874.19px;top:673.62px;font-size:11.5px;color:#ececec;transform:scaleX(1.0438);">12/18/2024</span>
<span class="t" style="left:516.87px;top:622.35px;font-size:11px;color:#e8e8e8;transform:scaleX(1.0360);">Implied Policy Rate (%)</span>
<span class="t" style="left:516.98px;top:634.55px;font-size:11px;color:#e8e8e8;transform:scaleX(1.0422);">Number of Hikes/Cuts Priced In</span>
<div class="t" style="left:421.5px;top:559.3px;font-size:15px;color:#e8e8e8;transform-origin:50% 50%;transform:translate(-50%,-50%) rotate(-90deg) scaleX(0.99)">Implied Policy Rate (%)</div>
<div class="t" style="left:1024px;top:560px;font-size:15px;color:#e8e8e8;transform-origin:50% 50%;transform:translate(-50%,-50%) rotate(90deg) scaleX(0.99)">Number of Hikes/Cuts Priced In</div>
<div class="r" style="left:0px;top:693px;width:1205px;height:3px;background:#1e1e1e;"></div>
<div class="r" style="left:152px;top:693px;width:1px;height:3px;background:#000;"></div>
<div class="r" style="left:680px;top:693px;width:1px;height:3px;background:#000;"></div>
</body></html>
